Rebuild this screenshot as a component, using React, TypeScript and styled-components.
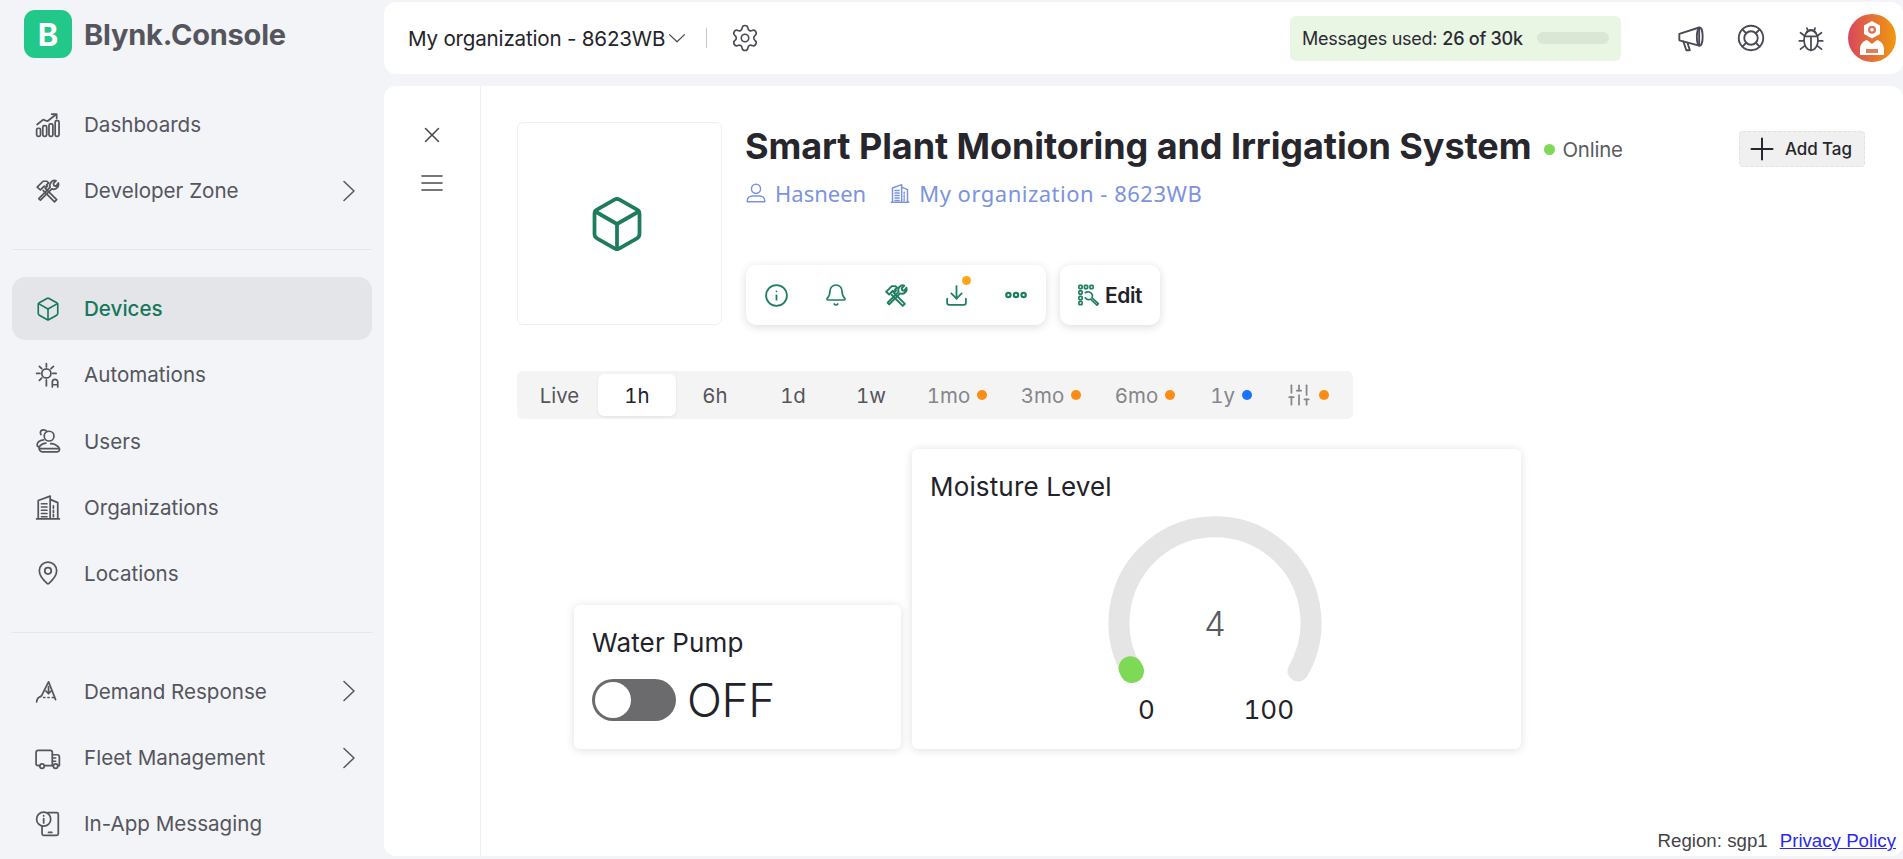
import React, { FunctionComponent, ReactNode } from 'react';
import styled, { createGlobalStyle } from 'styled-components';
import { Bell, Box, Download, Info, MapPin, Settings, SlidersVertical, X } from 'lucide-react';

const GlobalStyle = createGlobalStyle`
  html, body {
    margin: 0;
    padding: 0;
    height: 100%;
    overflow: hidden;
    background: #f2f4f8;
    font-family: Inter, "Liberation Sans", sans-serif;
  }
  * {
    box-sizing: border-box;
  }
`;

const Page = styled.div`
  display: flex;
  height: 100vh;
`;

/* sidebar */

const Sidebar = styled.aside`
  width: 384px;
  flex: none;
`;

const Brand = styled.div`
  height: 93px;
  padding: 10px 24px 0;
  display: flex;
  align-items: flex-start;
  gap: 12px;
`;

const LogoMark = styled.div`
  width: 48px;
  height: 48px;
  border-radius: 11px;
  background: #21c88a;
  color: #fff;
  font-size: 31px;
  font-weight: 700;
  display: flex;
  align-items: center;
  justify-content: center;
`;

const BrandName = styled.span`
  font-size: 29px;
  font-weight: 700;
  line-height: 50px;
  letter-spacing: -0.2px;
  color: #55555d;
`;

const NavGroup = styled.nav`
  display: flex;
  flex-direction: column;
  gap: 3.2px;
  padding: 0 12px;
`;

const NavRow = styled.div<{ $active?: boolean }>`
  height: 63px;
  display: flex;
  align-items: center;
  gap: 23px;
  padding: 0 11px 0 23px;
  border-radius: 14px;
  font-size: 20.6px;
  font-weight: ${(p) => (p.$active ? 500 : 400)};
  color: ${(p) => (p.$active ? '#17775a' : '#55555d')};
  background: ${(p) => (p.$active ? '#e4e5e9' : 'transparent')};

  > svg {
    flex: none;
  }
`;

const NavLabel = styled.span`
  flex: 1;
`;

const Divider = styled.hr`
  margin: 27px 12px;
  border: 0;
  border-top: 1px solid #e4e6ec;
`;

/* header */

const Column = styled.div`
  flex: 1;
  min-width: 0;
  display: flex;
  flex-direction: column;
  gap: 12px;
  padding: 2px 0 3px;
`;

const Header = styled.header`
  height: 72px;
  flex: none;
  display: flex;
  align-items: center;
  background: #fff;
  border-radius: 12px;
  padding: 0 7px 0 24px;
`;

const OrgName = styled.span`
  font-size: 20.6px;
  letter-spacing: -0.2px;
  color: #24242a;
`;

const OrgChevron = styled.span`
  display: flex;
  margin-left: 3px;
  color: #4a4a52;
`;

const HeaderRule = styled.span`
  width: 1px;
  height: 20px;
  margin: 0 23px 0 20px;
  background: #c9c4c2;
`;

const UsageBadge = styled.div`
  width: 331px;
  height: 45px;
  margin-left: auto;
  display: flex;
  align-items: center;
  padding: 0 12px;
  border-radius: 6px;
  background: #e9f6e3;
  font-size: 18px;
  letter-spacing: -0.25px;
  color: #2b2b33;
`;

const UsageValue = styled.span`
  margin-left: 5px;
  font-weight: 500;
`;

const UsageTrack = styled.span`
  width: 72px;
  height: 12px;
  margin-left: auto;
  border-radius: 6px;
  background: #dbe7d5;
`;

const HeaderIcons = styled.div`
  display: flex;
  align-items: center;
  gap: 32px;
  margin-left: 56px;
  color: #4a4a55;
`;

const Avatar = styled.div`
  width: 48px;
  height: 48px;
  margin-left: 23px;
  border-radius: 50%;
  background: linear-gradient(90deg, #d8475c, #ef9a0e);
  display: flex;
  align-items: center;
  justify-content: center;
`;

/* main panel */

const Main = styled.main`
  flex: 1;
  min-height: 0;
  display: flex;
  position: relative;
  background: #fff;
  border-radius: 12px;
`;

const Rail = styled.div`
  width: 97px;
  flex: none;
  padding-top: 36px;
  display: flex;
  flex-direction: column;
  align-items: center;
  gap: 24px;
  border-right: 1px solid #eeeff2;
  color: #4a4a50;
`;

const Content = styled.div`
  flex: 1;
  min-width: 0;
  padding: 36px 38px 0 36px;
`;

const DeviceHead = styled.section`
  display: flex;
  gap: 24px;
`;

const Thumb = styled.div`
  width: 205px;
  height: 203px;
  flex: none;
  display: flex;
  align-items: center;
  justify-content: center;
  padding-right: 5px;
  border: 1px solid #efefef;
  border-radius: 6px;
  color: #1e7b5b;
`;

const DeviceInfo = styled.div`
  flex: 1;
  min-width: 0;
  display: flex;
  flex-direction: column;
`;

const TitleRow = styled.div`
  display: flex;
  align-items: flex-start;
  height: 48px;
`;

const DeviceTitle = styled.h1`
  margin: 0 0 0 -1px;
  font-size: 36px;
  line-height: 48px;
  font-weight: 700;
  letter-spacing: -0.08px;
  color: #26262c;
`;

const OnlineDot = styled.span`
  width: 11px;
  height: 11px;
  margin: 22px 0 0 13px;
  border-radius: 50%;
  background: #7ed957;
`;

const OnlineText = styled.span`
  margin: 14px 0 0 7px;
  font-size: 20.4px;
  line-height: 28px;
  letter-spacing: -0.2px;
  color: #5b5b62;
`;

const AddTag = styled.div`
  width: 126px;
  height: 36px;
  margin: 9px 0 0 auto;
  display: flex;
  align-items: center;
  gap: 11px;
  padding-left: 10px;
  border: 1px dashed #e2e2e2;
  border-radius: 4px;
  background: #f0f0f0;
  font-size: 17px;
  font-weight: 500;
  letter-spacing: -0.1px;
  color: #26262c;
`;

const OwnerRow = styled.div`
  display: flex;
  align-items: center;
  height: 30px;
  margin-top: 8px;
  font-family: "Noto Sans", sans-serif;
  font-size: 22px;
  color: #7b93e0;
`;

const OwnerItem = styled.span<{ $spread?: number }>`
  display: flex;
  align-items: center;
  gap: 9px;
  margin-right: 24px;
  letter-spacing: ${(p) => p.$spread ?? 0}px;
`;

const Actions = styled.div`
  display: flex;
  gap: 14px;
  margin-top: auto;
`;

const ActionCard = styled.div`
  height: 60px;
  display: flex;
  align-items: center;
  border-radius: 10px;
  background: #fff;
  box-shadow: 0 2px 10px rgba(0, 0, 0, 0.14);
  color: #1f7f5f;
`;

const ActionIcon = styled.span`
  width: 60px;
  display: flex;
  justify-content: center;
  position: relative;
`;

const UpdateDot = styled.span`
  position: absolute;
  top: -7px;
  right: 15px;
  width: 9px;
  height: 9px;
  border-radius: 50%;
  background: #ffa61a;
`;

const EditButton = styled(ActionCard)`
  width: 100px;
  gap: 5px;
  padding-left: 18px;
  font-size: 21px;
  font-weight: 600;
  letter-spacing: -0.4px;
  color: #222228;

  > svg {
    color: #1f7f5f;
  }
`;

const RangeBar = styled.div`
  width: fit-content;
  height: 48px;
  margin-top: 46px;
  display: flex;
  padding: 3px 9px 3px 4px;
  border-radius: 6px;
  background: #f4f4f4;
`;

const RangeTab = styled.div<{ $w: number; $active?: boolean; $muted?: boolean }>`
  width: ${(p) => p.$w}px;
  display: flex;
  align-items: center;
  justify-content: center;
  gap: 7px;
  border-radius: 6px;
  font-size: 20.4px;
  font-variant-numeric: tabular-nums;
  color: ${(p) => (p.$active ? '#222228' : p.$muted ? '#85858b' : '#55555b')};
  background: ${(p) => (p.$active ? '#fff' : 'transparent')};
  box-shadow: ${(p) => (p.$active ? '0 1px 3px rgba(0, 0, 0, 0.08)' : 'none')};
`;

const PlanDot = styled.span<{ $color: string }>`
  width: 10px;
  height: 10px;
  border-radius: 50%;
  background: ${(p) => p.$color};
`;

const Widgets = styled.section`
  display: flex;
  align-items: flex-end;
  gap: 11px;
  margin: 30px 0 0 57px;
`;

const Widget = styled.div<{ $w: number; $h: number }>`
  width: ${(p) => p.$w}px;
  height: ${(p) => p.$h}px;
  padding: 20px 18px 0;
  border-radius: 6px;
  background: #fff;
  box-shadow: 0 1px 10px rgba(0, 0, 0, 0.13);
`;

const WidgetTitle = styled.div`
  font-size: 26px;
  line-height: 36px;
  letter-spacing: 0.15px;
  color: #222228;
`;

const SwitchRow = styled.div`
  display: flex;
  align-items: center;
  gap: 11px;
  margin-top: 18px;
`;

const Switch = styled.div`
  width: 84px;
  height: 42px;
  padding: 3px;
  border-radius: 21px;
  background: #6b6b6d;
`;

const SwitchKnob = styled.div`
  width: 36px;
  height: 36px;
  border-radius: 50%;
  background: #fff;
`;

const SwitchText = styled.span`
  font-size: 46px;
  font-weight: 300;
  line-height: 42px;
  letter-spacing: -0.3px;
  color: #222228;
`;

const GaugeWrap = styled.div`
  width: 240px;
  margin: 3px 0 0 165px;
  position: relative;
`;

const GaugeSvg = styled.svg`
  display: block;
`;

const GaugeValue = styled.span`
  position: absolute;
  left: 0;
  right: 0;
  top: 96px;
  text-align: center;
  font-size: 34px;
  font-weight: 300;
  line-height: 40px;
  color: #5a5a60;
`;

const GaugeScale = styled.div`
  display: flex;
  justify-content: space-between;
  width: 156px;
  margin: 1px 0 0 43px;
  font-size: 26px;
  font-variant-numeric: tabular-nums;
  line-height: 32px;
  color: #222228;
`;

const FooterNote = styled.div`
  position: absolute;
  right: 7px;
  bottom: 3px;
  display: flex;
  gap: 12px;
  font-family: "Liberation Sans", sans-serif;
  font-size: 18.7px;
  line-height: 24px;
  color: #444448;
`;

const PolicyLink = styled.a`
  color: #2a2aee;
  text-decoration: underline;
`;

/* drawn icons */

const Glyph: FunctionComponent<{ size?: number; width?: number; children: ReactNode }> = ({
  size = 26,
  width = 1.6,
  children,
}) => (
  <svg
    width={size}
    height={size}
    viewBox="0 0 24 24"
    fill="none"
    stroke="currentColor"
    strokeWidth={width}
    strokeLinecap="round"
    strokeLinejoin="round"
  >
    {children}
  </svg>
);

const ChartIcon = () => (
  <Glyph>
    <rect x="1.500" y="15" width="3.600" height="7.500" rx="1.400" />
    <rect x="7.200" y="12.500" width="3.600" height="10" rx="1.400" />
    <rect x="12.900" y="11" width="3.600" height="11.500" rx="1.400" />
    <rect x="18.600" y="8" width="3.600" height="14.500" rx="1.400" />
    <path d="M2 11.500 7.500 7l4 1.500L19 2.500M15.500 2H20v4" />
  </Glyph>
);

const ToolsIcon: FunctionComponent<{ size?: number; width?: number }> = ({ size, width }) => (
  <Glyph size={size} width={width}>
    <path d="M2 8.500 7.500 3H11l1.500 1.500-2 2 1 1L10 9 8.500 7.500l-3.500 3.500z" />
    <path d="M9.500 9.500 20 20l-2 2L7.500 11.500" />
    <path d="M21.500 4.500a4.500 4.500 0 0 1-6 5.500L5 20.500 3.500 19 14 8.500a4.500 4.500 0 0 1 5.500-6L17 5l.5 2 2 .5z" />
  </Glyph>
);

const AutomationIcon = () => (
  <Glyph>
    <circle cx="10.500" cy="10.500" r="4.200" />
    <path d="M10.500 1.500v3M1.500 10.500h3M16.500 10.500h3M4 4l2.200 2.200M17 4l-2.200 2.200M4 17l2.200-2.200M10.500 16.500v5.500" />
    <path d="M16 23v-4.500a2.400 2.400 0 0 1 5 0V23M16 21h5" />
  </Glyph>
);

const UsersIcon = () => (
  <Glyph>
    <circle cx="13" cy="7.500" r="4.500" />
    <path d="M11 3.200A4.500 4.500 0 0 0 6.500 2C5 2.500 4.500 4.500 5.500 6" />
    <path d="M8 11c-3 .5-6 2-6 4.500 0 1.500 1 2 2 2" />
    <path d="M10 14c-3 .5-5 1.500-6 3.500-.7 2 .5 4.500 2.500 4.500h14c1.500 0 2.500-1.500 2-3-1-3-5-4.500-8-4.500" />
    <path d="M5 19h17" />
  </Glyph>
);

const BuildingIcon: FunctionComponent<{ size?: number; width?: number }> = ({ size, width }) => (
  <Glyph size={size} width={width}>
    <path d="M1.500 23h21M3 23V6l11-4v21M14 5l7 3v15" />
    <path d="M6 9h5M6 12h5M6 15h5M6 18h5M6 21h5M17 11v2M17 15v2M17 19v2" />
  </Glyph>
);

const DemandIcon = () => (
  <Glyph>
    <path d="M1.500 22c.5-3 1-4 3-4.500 2-.5 2-2 3-4L12.500 3.500 19 20" />
    <path d="M12.500 8v6M10 12l2.500 2.500L15 12M8 18h1M12 18h1M16 18h1" />
  </Glyph>
);

const TruckIcon = () => (
  <Glyph>
    <path d="M4 19H3a2 2 0 0 1-2-2V7a2 2 0 0 1 2-2h11a2 2 0 0 1 2 2v12H9" />
    <path d="M16 9h4.500a2 2 0 0 1 2 2v8h-1M16 19h.5M19 12h-3M19 15h-3" />
    <circle cx="6.500" cy="19.500" r="2" />
    <circle cx="19" cy="19.500" r="2" />
  </Glyph>
);

const PhoneInfoIcon = () => (
  <Glyph>
    <circle cx="8" cy="7.500" r="6.500" />
    <path d="M8 7v4M8 4.300v.2M12 1.500h8a1.500 1.500 0 0 1 1.500 1.500v18a1.500 1.500 0 0 1-1.500 1.500H8A1.500 1.500 0 0 1 6.500 21v-6.500M12.500 19.800h3" />
  </Glyph>
);

const NavChevron = () => (
  <Glyph size={24} width={1.5}>
    <path d="M7 2.500 17 12 7 21.500" />
  </Glyph>
);

const DownChevron = () => (
  <Glyph size={18} width={1.7}>
    <path d="M2 7.500 12 17 22 7.500" />
  </Glyph>
);

const MenuLines = () => (
  <Glyph size={22} width={1.5}>
    <path d="M1 4.400h22M1 12h22M1 19.600h22" />
  </Glyph>
);

const PlusIcon = () => (
  <Glyph size={24} width={2}>
    <path d="M1.500 12h21M12 1.500v21" />
  </Glyph>
);

const OwnerIcon = () => (
  <Glyph size={20} width={1.8}>
    <circle cx="12" cy="7" r="5.500" />
    <path d="M1.500 22.500V21c0-3 3-5.500 6-5.500h9c3 0 6 2.500 6 5.500v1.500z" />
  </Glyph>
);

const HornIcon = () => (
  <Glyph size={28} width={1.6}>
    <path d="M2 8.500 19 3v15.500L2 14z" />
    <ellipse cx="19.500" cy="10.800" rx="2.500" ry="7.800" />
    <path d="M5.500 15 8 22.500h3L9 16" />
  </Glyph>
);

const RingIcon = () => (
  <Glyph size={28} width={1.6}>
    <circle cx="12" cy="12" r="10.500" />
    <circle cx="12" cy="12" r="5.800" />
    <path d="M4.600 4.600 7.900 7.900M19.400 4.600 16.100 7.900M4.600 19.400l3.300-3.300M19.400 19.400l-3.300-3.300" />
  </Glyph>
);

const BeetleIcon = () => (
  <Glyph size={28} width={1.5}>
    <ellipse cx="12" cy="14" rx="6" ry="8.500" />
    <path d="M8 7.500a4.500 4.500 0 0 1 8 0M6.500 10.500h11M12 10.500V22.500" />
    <path d="M8.500 3.500 9 5M15.500 3.500 15 5M6.500 10 3 7.500M17.500 10 21 7.500M6 14.500H2M18 14.500h4M6.800 18.500 3 21.500M17.200 18.500 21 21.500" />
  </Glyph>
);

const EditIcon = () => (
  <Glyph size={22} width={1.8}>
    <rect x="1" y="1.500" width="3.500" height="3.500" rx=".8" />
    <rect x="7" y="1.500" width="3.500" height="3.500" rx=".8" />
    <rect x="13" y="1.500" width="3.500" height="3.500" rx=".8" />
    <rect x="1" y="7.500" width="3.500" height="3.500" rx=".8" />
    <rect x="1" y="13.500" width="3.500" height="3.500" rx=".8" />
    <rect x="1" y="19" width="3.500" height="3.500" rx=".8" />
    <path d="M8 9.500a5 5 0 0 1 7.500 2c.5 1.500.2 2.500-.3 3.500l7 6.500-1.500 1.500-7-6.500c-2 1-4.500.5-5.700-1.500" />
  </Glyph>
);

const DotsIcon = () => (
  <Glyph size={26} width={2}>
    <circle cx="5" cy="12" r="2" />
    <circle cx="12" cy="12" r="2" />
    <circle cx="19" cy="12" r="2" />
  </Glyph>
);

const AvatarFigure = () => (
  <svg width="30" height="36" viewBox="0 0 30 36">
    <path d="M15 1 23 5.500V14L15 18.500 7 14V5.500z" fill="#fff" />
    <circle cx="15" cy="9.800" r="4" fill="#e0705a" />
    <circle cx="15" cy="9.800" r="1.800" fill="#fff" />
    <path d="M3 35V29c0-5 4-8.500 7-9l5 4 5-4c3 .5 7 4 7 9v6z" fill="#fff" />
    <path d="M9 29h12v4H9z" fill="#e0805a" />
  </svg>
);

const topNav = [
  { label: 'Dashboards', icon: <ChartIcon /> },
  { label: 'Developer Zone', icon: <ToolsIcon />, more: true },
];

const midNav = [
  { label: 'Devices', icon: <Box size={26} strokeWidth={1.5} />, active: true },
  { label: 'Automations', icon: <AutomationIcon /> },
  { label: 'Users', icon: <UsersIcon /> },
  { label: 'Organizations', icon: <BuildingIcon /> },
  { label: 'Locations', icon: <MapPin size={26} strokeWidth={1.6} /> },
];

const lowNav = [
  { label: 'Demand Response', icon: <DemandIcon />, more: true },
  { label: 'Fleet Management', icon: <TruckIcon />, more: true },
  { label: 'In-App Messaging', icon: <PhoneInfoIcon /> },
];

type NavEntry = { label: string; icon: ReactNode; more?: boolean; active?: boolean };

const NavList: FunctionComponent<{ items: NavEntry[] }> = ({ items }) => (
  <NavGroup>
    {items.map((item) => (
      <NavRow key={item.label} $active={item.active}>
        {item.icon}
        <NavLabel>{item.label}</NavLabel>
        {item.more && <NavChevron />}
      </NavRow>
    ))}
  </NavGroup>
);

const ranges = [
  { label: 'Live', w: 77 },
  { label: '1h', w: 78, active: true },
  { label: '6h', w: 78 },
  { label: '1d', w: 78 },
  { label: '1w', w: 78 },
  { label: '1mo', w: 94, muted: true, dot: '#fb8c14' },
  { label: '3mo', w: 94, muted: true, dot: '#fb8c14' },
  { label: '6mo', w: 94, muted: true, dot: '#fb8c14' },
  { label: '1y', w: 78, muted: true, dot: '#1a73ff' },
];

// gauge: arc centre sits at 120,114.5 in a 240 wide box
const Gauge = () => (
  <GaugeWrap>
    <GaugeSvg width="240" height="185" viewBox="0 0 240 185">
      <path
        d="M37 163 A96 96 0 1 1 203 163"
        fill="none"
        stroke="#e5e5e5"
        strokeWidth="21"
        strokeLinecap="round"
      />
      <path
        d="M37 163 A96 96 0 0 1 35.600 160.300"
        fill="none"
        stroke="#7ed957"
        strokeWidth="24"
        strokeLinecap="round"
      />
    </GaugeSvg>
    <GaugeValue>4</GaugeValue>
    <GaugeScale>
      <span>0</span>
      <span>100</span>
    </GaugeScale>
  </GaugeWrap>
);

const App: FunctionComponent = () => (
  <Page>
    <GlobalStyle />
    <Sidebar>
      <Brand>
        <LogoMark>B</LogoMark>
        <BrandName>Blynk.Console</BrandName>
      </Brand>
      <NavList items={topNav} />
      <Divider />
      <NavList items={midNav} />
      <Divider />
      <NavList items={lowNav} />
    </Sidebar>
    <Column>
      <Header>
        <OrgName>My organization - 8623WB</OrgName>
        <OrgChevron>
          <DownChevron />
        </OrgChevron>
        <HeaderRule />
        <Settings size={30} strokeWidth={1.3} color="#4a4a55" />
        <UsageBadge>
          Messages used:<UsageValue>26 of 30k</UsageValue>
          <UsageTrack />
        </UsageBadge>
        <HeaderIcons>
          <HornIcon />
          <RingIcon />
          <BeetleIcon />
        </HeaderIcons>
        <Avatar>
          <AvatarFigure />
        </Avatar>
      </Header>
      <Main>
        <Rail>
          <X size={26} strokeWidth={1.4} />
          <MenuLines />
        </Rail>
        <Content>
          <DeviceHead>
            <Thumb>
              <Box size={60} strokeWidth={1.5} />
            </Thumb>
            <DeviceInfo>
              <TitleRow>
                <DeviceTitle>Smart Plant Monitoring and Irrigation System</DeviceTitle>
                <OnlineDot />
                <OnlineText>Online</OnlineText>
                <AddTag>
                  <PlusIcon />
                  Add Tag
                </AddTag>
              </TitleRow>
              <OwnerRow>
                <OwnerItem>
                  <OwnerIcon />
                  Hasneen
                </OwnerItem>
                <OwnerItem $spread={0.5}>
                  <BuildingIcon size={20} width={1.8} />
                  My organization - 8623WB
                </OwnerItem>
              </OwnerRow>
              <Actions>
                <ActionCard>
                  <ActionIcon>
                    <Info size={25} strokeWidth={1.7} />
                  </ActionIcon>
                  <ActionIcon>
                    <Bell size={24} strokeWidth={1.7} />
                  </ActionIcon>
                  <ActionIcon>
                    <ToolsIcon size={25} width={1.9} />
                  </ActionIcon>
                  <ActionIcon>
                    <Download size={25} strokeWidth={1.7} />
                    <UpdateDot />
                  </ActionIcon>
                  <ActionIcon>
                    <DotsIcon />
                  </ActionIcon>
                </ActionCard>
                <EditButton>
                  <EditIcon />
                  Edit
                </EditButton>
              </Actions>
            </DeviceInfo>
          </DeviceHead>
          <RangeBar>
            {ranges.map((r) => (
              <RangeTab key={r.label} $w={r.w} $active={r.active} $muted={r.muted}>
                {r.label}
                {r.dot && <PlanDot $color={r.dot} />}
              </RangeTab>
            ))}
            <RangeTab $w={74} $muted>
              <SlidersVertical size={26} strokeWidth={1.6} />
              <PlanDot $color="#fb8c14" />
            </RangeTab>
          </RangeBar>
          <Widgets>
            <Widget $w={327} $h={144}>
              <WidgetTitle>Water Pump</WidgetTitle>
              <SwitchRow>
                <Switch>
                  <SwitchKnob />
                </Switch>
                <SwitchText>OFF</SwitchText>
              </SwitchRow>
            </Widget>
            <Widget $w={609} $h={300}>
              <WidgetTitle>Moisture Level</WidgetTitle>
              <Gauge />
            </Widget>
          </Widgets>
        </Content>
        <FooterNote>
          <span>Region: sgp1</span>
          <PolicyLink href="#">Privacy Policy</PolicyLink>
        </FooterNote>
      </Main>
    </Column>
  </Page>
);

export default App;
